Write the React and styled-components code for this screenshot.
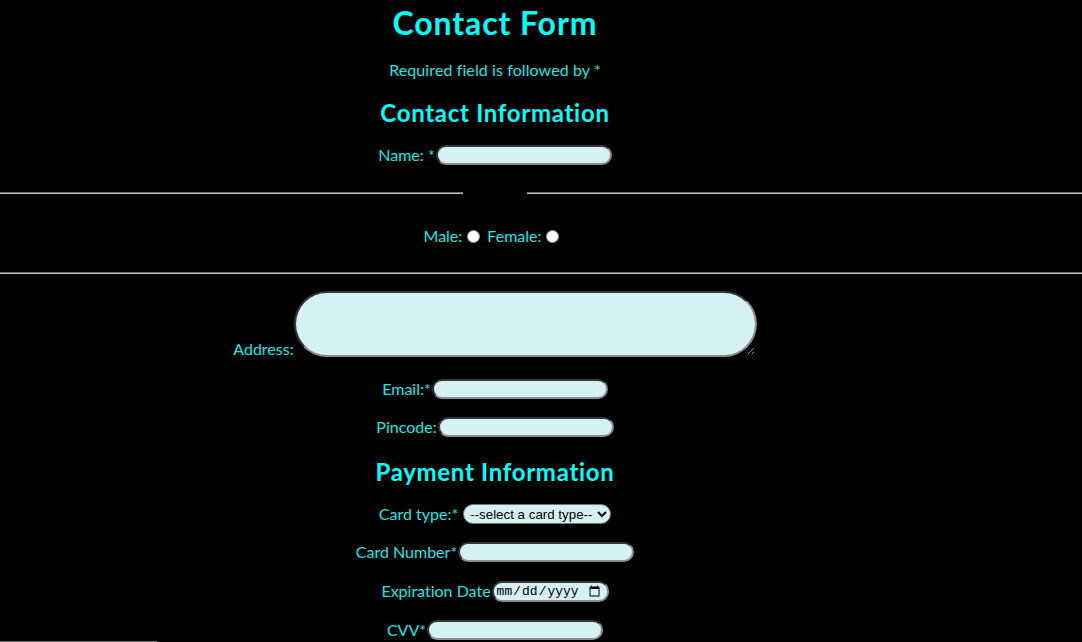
import React from "react";
import styled, { createGlobalStyle } from "styled-components";

const GlobalStyle = createGlobalStyle`
  html, body {
    margin: 0;
    padding: 0;
    background: #000;
    overflow: hidden;
  }
  body {
    font-family: Lato, "Open Sans", sans-serif;
    color: #1fe5e5;
    font-variant-ligatures: none;
  }
`;

const Page = styled.form`
  width: 1082px;
  margin: 0;
`;

const Section = styled.div`
  width: 990px;
  display: flex;
  flex-direction: column;
  align-items: center;
  text-align: center;
`;

const Title = styled.h1`
  margin: 0;
  padding-top: 3px;
  font-size: 32px;
  line-height: 40px;
  font-weight: 700;
  letter-spacing: 0.9px;
  color: #00ffff;
`;

const Note = styled.p`
  margin: 15px 0 0;
  font-size: 16px;
  line-height: 24px;
  letter-spacing: 0.1px;
`;

const SectionTitle = styled.h2`
  margin: ${(p) => p.$mt}px 0 0;
  font-size: 24px;
  line-height: 32px;
  font-weight: 700;
  letter-spacing: 0.7px;
  color: #00ffff;
`;

const Row = styled.div`
  margin-top: ${(p) => p.$mt}px;
  height: ${(p) => (p.$tall ? "auto" : "22px")};
  display: flex;
  justify-content: center;
  align-items: ${(p) => (p.$tall ? "flex-end" : "center")};
  font-size: 16px;
`;

const Label = styled.label`
  line-height: 16px;
  white-space: pre;
  margin-right: ${(p) => (p.$gap === undefined ? 1 : p.$gap)}px;
`;

const Field = styled.input`
  box-sizing: border-box;
  width: 176px;
  height: 20px;
  margin: 0;
  padding: 1px 8px;
  background: #d5f1f3;
  border: 2px inset #8c8c8c;
  border-radius: 10px;
  font-family: "Liberation Sans", sans-serif;
  font-size: 13px;
  outline: none;
`;

const DateField = styled(Field)`
  width: 117px;
  height: 21px;
  padding: 0 4px 0 2px;
  font-family: "Liberation Mono", "DejaVu Sans Mono", monospace;
  font-size: 13px;
  color: #000;
`;

const Area = styled.textarea`
  box-sizing: border-box;
  width: 463px;
  height: 66px;
  margin: 0;
  padding: 2px;
  background: #d5f1f3;
  border: 2px inset #8c8c8c;
  border-radius: 34px;
  font-family: "Liberation Mono", monospace;
  font-size: 13px;
  outline: none;
`;

const Select = styled.select`
  box-sizing: border-box;
  width: 148px;
  height: 20px;
  margin: 0 0 0 4px;
  padding: 0 0 0 2px;
  background-color: #d5f1f3;
  border: 1px solid #767676;
  border-radius: 10px;
  font-family: "Liberation Sans", Arial, sans-serif;
  font-size: 13.33px;
  color: #000;
`;

const Group = styled.fieldset`
  box-sizing: border-box;
  width: 1082px;
  margin: ${(p) => p.$mt}px 0 0;
  padding: 31px 92px 25px 0;
  border: 2px groove #c0c0c0;
  border-left: none;
  border-right: none;
  min-inline-size: 0;
`;

const Gap = styled.legend`
  width: ${(p) => p.$w}px;
  height: 0;
  padding: 0;
  margin-left: ${(p) => p.$x}px;
  line-height: 0;
  font-size: 0;
`;

const Radio = styled.input`
  width: 13px;
  height: 13px;
  margin: 0 7px 0 5px;
`;

const TailGroup = styled.fieldset`
  box-sizing: border-box;
  width: 1082px;
  margin: 0;
  padding: 0;
  height: 40px;
  border: 2px groove #c0c0c0;
  border-left: none;
  border-right: none;
  min-inline-size: 0;
`;

export default function App() {
  return (
    <>
      <GlobalStyle />
      <Page onSubmit={(e) => e.preventDefault()}>
        <Section>
          <Title>Contact Form</Title>
          <Note>Required field is followed by *</Note>
          <SectionTitle $mt={15}>Contact Information</SectionTitle>
          <Row $mt={15}>
            <Label htmlFor="name">Name: *</Label>
            <Field id="name" type="text" />
          </Row>
        </Section>

        <Group $mt={26}>
          <Gap $x={463} $w={64} />
          <Row $mt={0}>
            <Label $gap={0}>Male:</Label>
            <Radio type="radio" name="gender" value="male" />
            <Label $gap={0}>Female:</Label>
            <Radio type="radio" name="gender" value="female" />
          </Row>
        </Group>

        <Section>
          <Row $mt={17} $tall>
            <Label htmlFor="address" $gap={0}>Address:</Label>
            <Area id="address" />
          </Row>
          <Row $mt={21}>
            <Label htmlFor="email">Email:*</Label>
            <Field id="email" type="email" />
          </Row>
          <Row $mt={16}>
            <Label htmlFor="pincode">Pincode:</Label>
            <Field id="pincode" type="text" />
          </Row>
          <SectionTitle $mt={18}>Payment Information</SectionTitle>
          <Row $mt={15}>
            <Label htmlFor="card">Card type:*</Label>
            <Select id="card" defaultValue="">
              <option value="">--select a card type--</option>
              <option value="visa">Visa</option>
              <option value="mastercard">MasterCard</option>
              <option value="rupay">RuPay</option>
            </Select>
          </Row>
          <Row $mt={16}>
            <Label htmlFor="cardnum">Card Number*</Label>
            <Field id="cardnum" type="text" />
          </Row>
          <Row $mt={17}>
            <Label htmlFor="exp">Expiration Date</Label>
            <DateField id="exp" type="date" />
          </Row>
          <Row $mt={17}>
            <Label htmlFor="cvv">CVV*</Label>
            <Field id="cvv" type="text" />
          </Row>
        </Section>
        <TailGroup>
          <Gap $x={157} $w={925} />
        </TailGroup>
      </Page>
    </>
  );
}
